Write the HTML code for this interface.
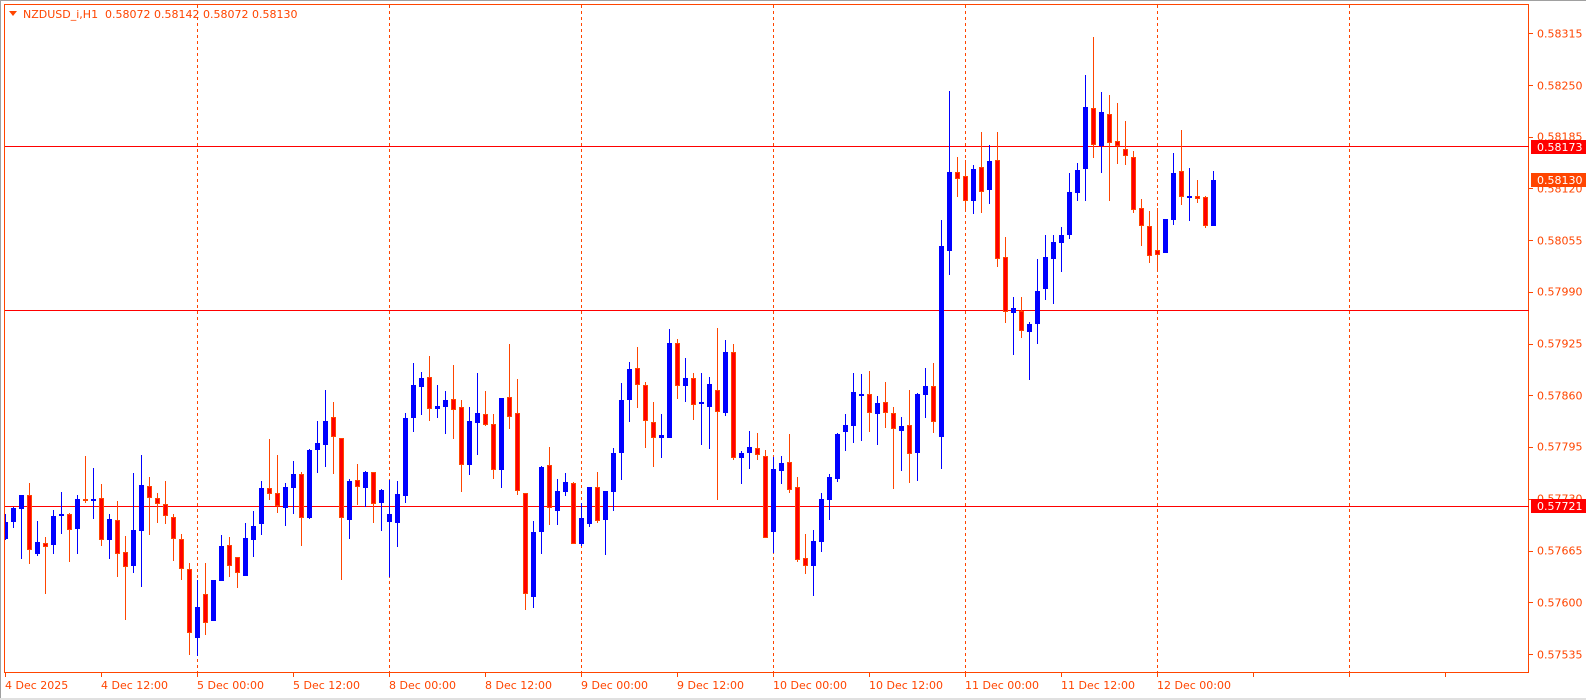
<!DOCTYPE html>
<html><head><meta charset="utf-8"><style>
html,body{margin:0;padding:0;background:#fff;width:1586px;height:700px;overflow:hidden}
svg{display:block}
text{font-family:"DejaVu Sans","Liberation Sans",sans-serif;font-size:11px;fill:#ff4500}
</style></head><body>
<svg width="1586" height="700" viewBox="0 0 1586 700" xmlns="http://www.w3.org/2000/svg" shape-rendering="crispEdges">
<rect x="0" y="0" width="1586" height="700" fill="#fff"/>
<rect x="0" y="0" width="1586" height="1" fill="#a0a0a0"/>
<rect x="0" y="0" width="1" height="700" fill="#a0a0a0"/>
<rect x="0" y="698" width="1586" height="2" fill="#e0e0e0"/>
<!-- frame -->
<rect x="4.5" y="4.5" width="1524" height="668" fill="none" stroke="#ff4500" stroke-width="1"/>
<!-- vertical dotted -->
<g stroke="#ff4500" stroke-width="1" stroke-dasharray="3,3">
<path d="M197.5 5V672M389.5 5V672M581.5 5V672M773.5 5V672M965.5 5V672M1157.5 5V672M1349.5 5V672"/>
</g>
<!-- horizontal levels -->
<g fill="#ff0000">
<rect x="5" y="146" width="1524" height="1"/>
<rect x="5" y="310" width="1524" height="1"/>
<rect x="5" y="506" width="1524" height="1"/>
</g>
<!-- wicks -->
<path fill="none" stroke="#0000ff" stroke-width="1" d="M5.5 514V540 M13.5 507V528 M21.5 495V559 M37.5 521V556 M53.5 510V554 M61.5 492V534 M77.5 495V554 M93.5 468V519 M109.5 514V559 M133.5 473V573 M141.5 455V587 M197.5 580V656 M213.5 580V621 M221.5 535V581 M245.5 523V576 M253.5 511V557 M261.5 481V535 M285.5 483V526 M293.5 461V514 M309.5 449V519 M317.5 421V473 M325.5 390V467 M349.5 479V539 M365.5 471V507 M381.5 489V531 M389.5 480V577 M397.5 481V547 M405.5 413V503 M413.5 363V432 M421.5 372V415 M437.5 385V418 M445.5 391V434 M469.5 407V475 M477.5 373V455 M501.5 398V488 M533.5 521V608 M541.5 466V554 M557.5 479V525 M565.5 473V496 M581.5 503V546 M589.5 487V527 M605.5 491V555 M613.5 448V511 M621.5 383V480 M629.5 362V422 M661.5 414V458 M669.5 329V438 M685.5 358V402 M701.5 373V445 M709.5 377V449 M725.5 340V416 M741.5 451V484 M749.5 431V469 M773.5 457V553 M781.5 456V484 M813.5 530V596 M821.5 493V552 M829.5 474V520 M837.5 433V482 M845.5 414V451 M853.5 373V443 M861.5 374V441 M877.5 396V445 M901.5 417V471 M917.5 393V481 M925.5 368V418 M941.5 220V469 M949.5 91V275 M973.5 165V214 M989.5 145V204 M1013.5 297V355 M1029.5 322V380 M1037.5 259V344 M1045.5 235V300 M1053.5 235V304 M1061.5 227V272 M1069.5 173V239 M1077.5 163V201 M1085.5 75V201 M1101.5 92V173 M1165.5 219V253 M1173.5 153V225 M1189.5 168V221 M1213.5 171V226"/>
<path fill="none" stroke="#ff4500" stroke-width="1" d="M29.5 483V564 M45.5 537V594 M69.5 513V562 M85.5 456V503 M101.5 484V546 M117.5 501V577 M125.5 536V620 M149.5 477V535 M157.5 493V523 M165.5 481V524 M173.5 514V561 M181.5 534V580 M189.5 563V655 M205.5 563V635 M229.5 537V577 M237.5 557V588 M269.5 439V500 M277.5 455V513 M301.5 472V546 M333.5 402V474 M341.5 438V580 M357.5 464V505 M373.5 472V523 M429.5 356V421 M453.5 365V439 M461.5 400V492 M485.5 391V426 M493.5 414V479 M509.5 344V429 M517.5 379V495 M525.5 493V610 M549.5 447V525 M573.5 482V544 M597.5 472V523 M637.5 347V408 M645.5 382V448 M653.5 402V467 M677.5 339V399 M693.5 373V420 M717.5 328V500 M733.5 344V460 M757.5 433V460 M765.5 450V538 M789.5 434V493 M797.5 477V562 M805.5 534V574 M869.5 371V432 M885.5 382V428 M893.5 407V489 M909.5 390V483 M933.5 363V433 M957.5 157V197 M965.5 160V210 M981.5 132V213 M997.5 132V267 M1005.5 237V323 M1021.5 297V338 M1093.5 37V158 M1109.5 95V201 M1117.5 103V164 M1125.5 121V165 M1133.5 151V213 M1141.5 199V246 M1149.5 211V263 M1157.5 208V271 M1181.5 130V205 M1197.5 180V203 M1205.5 196V228"/>
<!-- blue bodies -->
<path fill="#0000ff" d="M5 522h3v17h-3z M11 508h5v14h-5z M19 495h5v14h-5z M35 542h5v12h-5z M51 516h5v29h-5z M59 514h5v2h-5z M75 499h5v30h-5z M91 499h5v2h-5z M107 519h5v21h-5z M131 530h5v36h-5z M139 485h5v46h-5z M195 607h5v31h-5z M211 580h5v41h-5z M219 546h5v35h-5z M243 538h5v38h-5z M251 526h5v14h-5z M259 488h5v36h-5z M283 487h5v21h-5z M291 474h5v14h-5z M307 450h5v68h-5z M315 443h5v7h-5z M323 421h5v24h-5z M347 481h5v39h-5z M363 472h5v16h-5z M379 490h5v13h-5z M387 514h5v8h-5z M395 494h5v29h-5z M403 418h5v78h-5z M411 385h5v33h-5z M419 378h5v9h-5z M435 406h5v3h-5z M443 400h5v7h-5z M467 421h5v44h-5z M475 413h5v10h-5z M499 398h5v72h-5z M531 532h5v65h-5z M539 467h5v65h-5z M555 491h5v20h-5z M563 482h5v10h-5z M579 518h5v26h-5z M587 487h5v37h-5z M603 491h5v29h-5z M611 453h5v39h-5z M619 400h5v53h-5z M627 369h5v31h-5z M659 435h5v3h-5z M667 343h5v95h-5z M683 378h5v8h-5z M699 402h5v2h-5z M707 384h5v23h-5z M723 352h5v61h-5z M739 453h5v5h-5z M747 447h5v6h-5z M771 469h5v63h-5z M779 463h5v8h-5z M811 541h5v25h-5z M819 499h5v43h-5z M827 477h5v23h-5z M835 434h5v45h-5z M843 425h5v7h-5z M851 392h5v34h-5z M859 394h5v2h-5z M875 403h5v11h-5z M899 426h5v5h-5z M915 394h5v59h-5z M923 386h5v9h-5z M939 246h5v191h-5z M947 172h5v79h-5z M971 169h5v32h-5z M987 161h5v29h-5z M1011 308h5v5h-5z M1027 324h5v8h-5z M1035 291h5v33h-5z M1043 257h5v32h-5z M1051 242h5v17h-5z M1059 235h5v8h-5z M1067 192h5v43h-5z M1075 170h5v23h-5z M1083 107h5v62h-5z M1099 112h5v34h-5z M1163 219h5v34h-5z M1171 173h5v47h-5z M1187 196h5v2h-5z M1211 180h5v46h-5z"/>
<!-- red bodies -->
<path fill="#ff0000" stroke="#ff4500" stroke-width="1" d="M27.5 495.5h4v54h-4z M43.5 543.5h4v3h-4z M67.5 514.5h4v15h-4z M83.5 499.5h4v1h-4z M99.5 498.5h4v41h-4z M115.5 520.5h4v33h-4z M123.5 552.5h4v14h-4z M147.5 486.5h4v11h-4z M155.5 498.5h4v5h-4z M163.5 504.5h4v11h-4z M171.5 517.5h4v21h-4z M179.5 539.5h4v29h-4z M187.5 569.5h4v63h-4z M203.5 594.5h4v28h-4z M227.5 545.5h4v20h-4z M235.5 557.5h4v15h-4z M267.5 488.5h4v5h-4z M275.5 493.5h4v12h-4z M299.5 474.5h4v43h-4z M331.5 417.5h4v19h-4z M339.5 438.5h4v79h-4z M355.5 480.5h4v6h-4z M371.5 472.5h4v31h-4z M427.5 377.5h4v31h-4z M451.5 399.5h4v10h-4z M459.5 407.5h4v57h-4z M483.5 414.5h4v10h-4z M491.5 424.5h4v45h-4z M507.5 397.5h4v19h-4z M515.5 413.5h4v77h-4z M523.5 493.5h4v100h-4z M547.5 465.5h4v42h-4z M571.5 483.5h4v60h-4z M595.5 487.5h4v33h-4z M635.5 368.5h4v16h-4z M643.5 385.5h4v35h-4z M651.5 422.5h4v15h-4z M675.5 343.5h4v42h-4z M691.5 378.5h4v26h-4z M715.5 390.5h4v21h-4z M731.5 352.5h4v105h-4z M755.5 448.5h4v6h-4z M763.5 456.5h4v81h-4z M787.5 462.5h4v27h-4z M795.5 487.5h4v72h-4z M803.5 558.5h4v7h-4z M867.5 394.5h4v18h-4z M883.5 402.5h4v10h-4z M891.5 413.5h4v15h-4z M907.5 425.5h4v28h-4z M931.5 386.5h4v35h-4z M955.5 172.5h4v6h-4z M963.5 176.5h4v24h-4z M979.5 167.5h4v24h-4z M995.5 160.5h4v98h-4z M1003.5 257.5h4v54h-4z M1019.5 311.5h4v19h-4z M1091.5 108.5h4v36h-4z M1107.5 114.5h4v28h-4z M1115.5 141.5h4v4h-4z M1123.5 149.5h4v6h-4z M1131.5 157.5h4v52h-4z M1139.5 208.5h4v17h-4z M1147.5 226.5h4v29h-4z M1155.5 250.5h4v4h-4z M1179.5 171.5h4v25h-4z M1195.5 196.5h4v2h-4z M1203.5 197.5h4v28h-4z"/>
<!-- price axis ticks -->
<path stroke="#ff4500" stroke-width="1" d="M1529 33.5h4M1529 85.5h4M1529 137.5h4M1529 188.5h4M1529 240.5h4M1529 292.5h4M1529 344.5h4M1529 395.5h4M1529 447.5h4M1529 499.5h4M1529 551.5h4M1529 602.5h4M1529 654.5h4"/>
<g dominant-baseline="central">
<text x="1537" y="34">0.58315</text>
<text x="1537" y="86">0.58250</text>
<text x="1537" y="137">0.58185</text>
<text x="1537" y="189">0.58120</text>
<text x="1537" y="241">0.58055</text>
<text x="1537" y="292">0.57990</text>
<text x="1537" y="344">0.57925</text>
<text x="1537" y="396">0.57860</text>
<text x="1537" y="447">0.57795</text>
<text x="1537" y="499">0.57730</text>
<text x="1537" y="551">0.57665</text>
<text x="1537" y="603">0.57600</text>
<text x="1537" y="655">0.57535</text>
</g>
<!-- price tags -->
<rect x="1531" y="140" width="55" height="14" fill="#ff0000"/>
<text x="1537" y="151" style="fill:#fff">0.58173</text>
<rect x="1531" y="173" width="55" height="14" fill="#ff4500"/>
<text x="1537" y="184" style="fill:#fff">0.58130</text>
<rect x="1531" y="499" width="55" height="14" fill="#ff0000"/>
<text x="1537" y="510" style="fill:#fff">0.57721</text>
<!-- time axis -->
<path stroke="#ff4500" stroke-width="1" d="M5.5 673v4M101.5 673v4M197.5 673v4M293.5 673v4M389.5 673v4M485.5 673v4M581.5 673v4M677.5 673v4M773.5 673v4M869.5 673v4M965.5 673v4M1061.5 673v4M1157.5 673v4M1253.5 673v4M1349.5 673v4M1445.5 673v4"/>
<g>
<text x="5" y="689">4 Dec 2025</text>
<text x="101" y="689">4 Dec 12:00</text>
<text x="197" y="689">5 Dec 00:00</text>
<text x="293" y="689">5 Dec 12:00</text>
<text x="389" y="689">8 Dec 00:00</text>
<text x="485" y="689">8 Dec 12:00</text>
<text x="581" y="689">9 Dec 00:00</text>
<text x="677" y="689">9 Dec 12:00</text>
<text x="773" y="689">10 Dec 00:00</text>
<text x="869" y="689">10 Dec 12:00</text>
<text x="965" y="689">11 Dec 00:00</text>
<text x="1061" y="689">11 Dec 12:00</text>
<text x="1157" y="689">12 Dec 00:00</text>
</g>
<!-- title -->
<path d="M9 11h8l-4 5z" fill="#ff4500" shape-rendering="auto"/>
<text x="23" y="18" xml:space="preserve">NZDUSD_i,H1  0.58072 0.58142 0.58072 0.58130</text>
</svg>
</body></html>
